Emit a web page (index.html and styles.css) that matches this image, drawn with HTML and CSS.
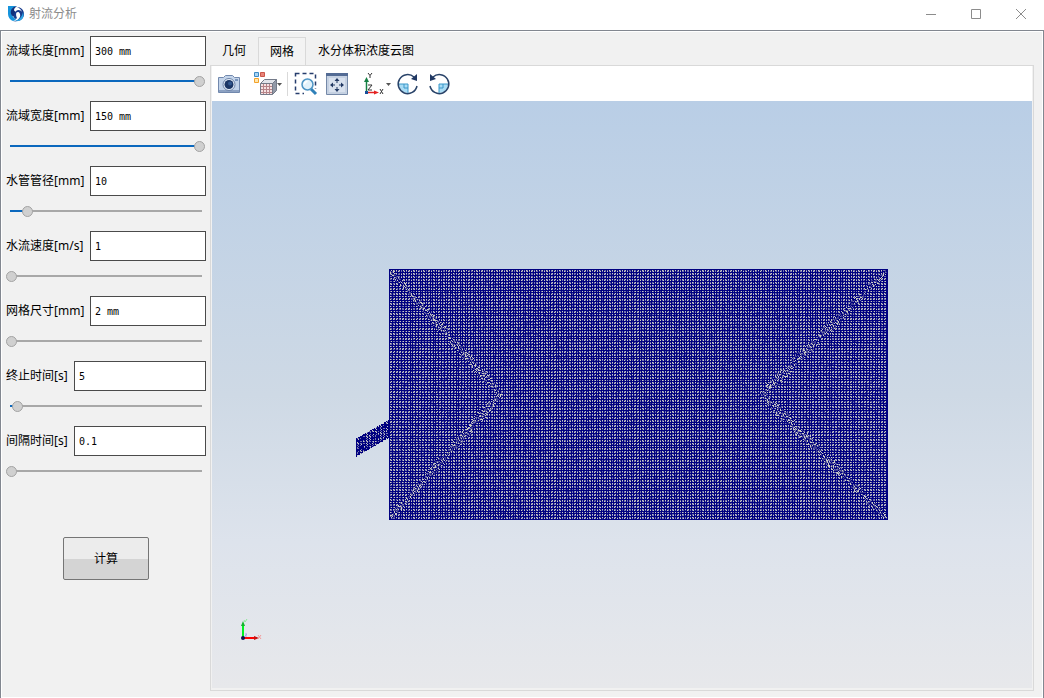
FILE: index.html
```
<!DOCTYPE html>
<html lang="zh-CN">
<head>
<meta charset="utf-8">
<title>射流分析</title>
<link rel="stylesheet" href="styles.css">
</head>
<body>
<header class="titlebar">
  <svg class="logo" viewBox="0 0 16 16" width="16" height="16" aria-hidden="true">
    <path d="M0 0h9C5 1 3 4 3.500 7.500S7 12 8 14L5 15C2 14 0 11 0 8z" fill="#1593dc"/>
    <path d="M9 0C4 1 2 4 3 8c1 3 4 3 5 1 1-3-2-4-2-5 0-2 2-3 3-4z" fill="#12307c"/>
    <path d="M9 1c4 0 7 3 7 7s-3 7-7 7l-4 1c5-2 8-4 7-8-1-3-4-2-4 0 0 3 2 4 0 5C4 12 6 7 8 5s5-1 6 1c-1-3-3-4-5-5z" fill="#173b8d"/>
    <path d="M15 6c2 6-2 10-8 9 4-1 7-4 8-9z" fill="#2ba5e5"/>
  </svg>
  <h1 class="title">射流分析</h1>
  <div class="window-buttons">
    <button class="window-button" type="button" aria-label="最小化"><svg width="12" height="12" viewBox="0 0 12 12"><path d="M1 6.500h10"/></svg></button>
    <button class="window-button" type="button" aria-label="最大化"><svg width="12" height="12" viewBox="0 0 12 12"><path d="M1.500 1.500h9v9h-9z"/></svg></button>
    <button class="window-button" type="button" aria-label="关闭"><svg width="12" height="12" viewBox="0 0 12 12"><path d="M1 1l10 10M11 1L1 11"/></svg></button>
  </div>
</header>
<main class="frame">
  <form class="params">
    <div class="param">
      <div class="field"><label for="length">流域长度[mm]</label><input class="value" id="length" type="text" value="300 mm"></div>
      <input class="slider" type="range" aria-label="流域长度" min="0" max="100" value="100" style="--fill:188px">
    </div>
    <div class="param">
      <div class="field"><label for="width">流域宽度[mm]</label><input class="value" id="width" type="text" value="150 mm"></div>
      <input class="slider" type="range" aria-label="流域宽度" min="0" max="100" value="100" style="--fill:188px">
    </div>
    <div class="param">
      <div class="field"><label for="pipe">水管管径[mm]</label><input class="value" id="pipe" type="text" value="10"></div>
      <input class="slider" type="range" aria-label="水管管径" min="0" max="188" value="16" style="--fill:16px">
    </div>
    <div class="param">
      <div class="field"><label for="speed">水流速度[m/s]</label><input class="value" id="speed" type="text" value="1"></div>
      <input class="slider" type="range" aria-label="水流速度" min="0" max="100" value="0" style="--fill:0px">
    </div>
    <div class="param">
      <div class="field"><label for="mesh-size">网格尺寸[mm]</label><input class="value" id="mesh-size" type="text" value="2 mm"></div>
      <input class="slider" type="range" aria-label="网格尺寸" min="0" max="100" value="0" style="--fill:0px">
    </div>
    <div class="param">
      <div class="field short"><label for="end">终止时间[s]</label><input class="value" id="end" type="text" value="5"></div>
      <input class="slider" type="range" aria-label="终止时间" min="0" max="188" value="6" style="--fill:6px">
    </div>
    <div class="param">
      <div class="field short"><label for="step">间隔时间[s]</label><input class="value" id="step" type="text" value="0.1"></div>
      <input class="slider" type="range" aria-label="间隔时间" min="0" max="100" value="0" style="--fill:0px">
    </div>
    <button class="compute" type="button">计算</button>
  </form>
  <section class="workspace">
    <div class="tabs" role="tablist">
      <button class="tab" type="button" role="tab">几何</button>
      <button class="tab active" type="button" role="tab" aria-selected="true">网格</button>
      <button class="tab" type="button" role="tab">水分体积浓度云图</button>
    </div>
    <div class="pane">
      <div class="toolbar">
        <button class="tool" type="button" aria-label="截图">
          <svg width="24" height="24" viewBox="0 0 24 24">
            <path d="M1.500 5.500h5l2-2h7l2 2h5v15h-21z" fill="#c3d4ea" stroke="#7188ad"/>
            <path d="M2 19h20" stroke="#8ca1c2" stroke-width="2"/>
            <circle cx="12" cy="12.500" r="6" fill="#e9f1fa" stroke="#6d83a8"/>
            <circle cx="12" cy="12.500" r="4.500" fill="#1c3766"/>
            <circle cx="13" cy="11.500" r="2" fill="#34598f"/>
            <path d="M18 8h3" stroke="#34598f"/>
          </svg>
        </button>
        <button class="tool view" type="button" aria-label="显示模式">
          <svg width="30" height="24" viewBox="0 0 30 24">
            <path d="M1.500 .5h4v4h-4z" fill="#a9d4f4" stroke="#3d8ac4"/>
            <path d="M7.500 .5h4v4h-4z" fill="#e98378" stroke="#c9574b"/>
            <path d="M1.500 6.500h4v4h-4z" fill="#ffe6ad" stroke="#f2a22b"/>
            <path d="M7.500 11.500l4-4h12l-4 4z" fill="#e1e4ea" stroke="#747b89"/>
            <path d="M19.500 11.500l4-4v11l-4 4z" fill="#9299a7" stroke="#747b89"/>
            <path d="M7.500 11.500h12v11h-12z" fill="#f6e2e2" stroke="#747b89"/>
            <path d="M10.500 12v10M13.500 12v10M16.500 12v10M8 14.500h11M8 17.500h11M8 20.500h11" stroke="#b68489"/>
            <path d="M24 11h5l-2.500 3z" fill="#555"/>
          </svg>
        </button>
        <span class="separator"></span>
        <button class="tool zoom" type="button" aria-label="框选缩放">
          <svg width="24" height="24" viewBox="0 0 24 24">
            <path d="M1.500 1.500h20v20h-20z" fill="none" stroke="#263d6d" stroke-width="1.500" stroke-dasharray="4 3"/>
            <path d="M10 17h14v7H10z" fill="#fff"/>
            <path d="M17 17l5 5" stroke="#2f80b9" stroke-width="3"/>
            <circle cx="13.500" cy="12.500" r="5.500" fill="#e2f2fb" stroke="#4d94c4" stroke-width="1.500"/>
            <path d="M10.500 12.500a3 3 0 0 1 3-3" fill="none" stroke="#fff" stroke-width="1.500"/>
          </svg>
        </button>
        <button class="tool fit" type="button" aria-label="适应窗口">
          <svg width="24" height="24" viewBox="0 0 24 24">
            <path d="M1.500 1.500h21v21h-21z" fill="#c5d1e2" stroke="#7589a8"/>
            <path d="M1 1h22v3H1z" fill="#536b94"/>
            <path d="M4 6h16v14H4z" fill="#d8e1ee"/>
            <path d="M12 8v3M12 15v3M7 13h3M14 13h3" stroke="#203863"/>
            <path d="M12 6l2.500 3h-5zM12 20l2.500-3h-5zM5 13l3-2.500v5zM19 13l-3-2.500v5z" fill="#203863"/>
          </svg>
        </button>
        <button class="tool axes" type="button" aria-label="视图方向">
          <svg width="28" height="24" viewBox="0 0 28 24">
            <path d="M3.500 20V9" stroke="#168044" stroke-width="1.500"/><path d="M3.500 5L6 10H1z" fill="#168044"/>
            <path d="M4 20.500h8" stroke="#e42222" stroke-width="1.500"/><path d="M16 20.500l-5-2v4z" fill="#e42222"/>
            <path d="M2 19h3v3H2z" fill="#174f9b"/>
            <path d="M5 1l2 2.500L9 1M7 3.500V6M5 13h4l-4 5h4M17 17l3 5M20 17l-3 5" fill="none" stroke="#333"/>
            <path d="M23 11h5l-2.500 3z" fill="#555"/>
          </svg>
        </button>
        <button class="tool rotate" type="button" aria-label="顺时针旋转">
          <svg width="24" height="24" viewBox="0 0 24 24">
            <path d="M3 12h9v9c-5 0-9-4-9-9z" fill="#a9dcf5"/><path d="M3 12h9v9M8 12v4h4" fill="none" stroke="#3a98ca"/>
            <path d="M18 5A9.500 9.500 0 1 0 21 14" fill="none" stroke="#294369" stroke-width="1.500"/>
            <path d="M21 2v7l-6-2z" fill="#203863"/>
          </svg>
        </button>
        <button class="tool" type="button" aria-label="逆时针旋转">
          <svg width="24" height="24" viewBox="0 0 24 24">
            <path d="M21 12h-9v9c5 0 9-4 9-9z" fill="#a9dcf5"/><path d="M21 12h-9v9M16 12v4h-4" fill="none" stroke="#3a98ca"/>
            <path d="M6 5A9.500 9.500 0 1 1 3 14" fill="none" stroke="#294369" stroke-width="1.500"/>
            <path d="M3 2v7l6-2z" fill="#203863"/>
          </svg>
        </button>
      </div>
      <div class="viewport">
        <canvas class="mesh" id="mesh" width="532" height="251"></canvas>
        <svg class="triad" width="24" height="24" viewBox="0 0 24 24" aria-hidden="true">
          <path d="M5 20V7" stroke="#00f020" stroke-width="2"/><path d="M5 3l2 5H3z" fill="#12b52a"/>
          <path d="M5 20h14" stroke="#f00" stroke-width="2"/><path d="M21 20l-5-2v4z" fill="#c51414"/>
          <circle cx="5" cy="20" r="2" fill="#101050"/>
          <path d="M6 2l1 2 2-3" fill="none" stroke="#8ee89a"/><path d="M20 17l3 4M23 17l-3 4" stroke="#f49a9a"/><path d="M7 16h2l-2 2h2" fill="none" stroke="#a8a0ee"/>
        </svg>
      </div>
    </div>
  </section>
</main>
<script src="mesh.js"></script>
</body>
</html>
```
FILE: styles.css
```
* { box-sizing: border-box; }
body {
  margin: 0;
  min-height: 100vh;
  display: flex;
  flex-direction: column;
  background: #f1f1f1;
  color: #000;
  font: 12px/16px "Noto Sans", "Noto Sans CJK SC", sans-serif;
}
button, input { font: inherit; color: inherit; margin: 0; }
svg, canvas { display: block; }
.titlebar {
  height: 30px;
  display: flex;
  align-items: center;
  gap: 5px;
  padding: 0 1px 2px 8px;
  background: #fff;
}
.title { margin: 0; font-size: 12px; font-weight: 400; color: #8c8c8c; }
.window-buttons { display: flex; margin-left: auto; }
.window-button {
  width: 45px;
  height: 28px;
  display: flex;
  align-items: center;
  justify-content: center;
  padding: 0;
  border: 0;
  background: none;
}
.window-button svg { fill: none; stroke: #8c8c8c; stroke-width: 1px; }
.frame {
  flex: 1;
  display: flex;
  border: 1px solid #828790;
  border-bottom: 0;
  box-shadow: inset 0 0 0 1px #fff;
}
.params {
  width: 209px;
  flex: none;
  display: flex;
  flex-direction: column;
  padding: 5px 4px 0 5px;
}
.param { height: 65px; }
.field { display: flex; gap: 6px; align-items: center; }
.field label { width: 78px; flex: none; white-space: nowrap; }
.short label { width: 62px; }
.value {
  flex: 1;
  min-width: 0;
  height: 30px;
  padding: 0 4px;
  border: 1px solid #4a4a4a;
  border-radius: 0;
  background: #fff;
  font: 10px/16px "DejaVu Sans Mono", monospace;
}
.slider {
  appearance: none;
  display: block;
  width: 199px;
  height: 11px;
  margin: 10px 0 0;
  background:
    linear-gradient(#0b68bd, #0b68bd) 4px 4px / var(--fill) 2px no-repeat,
    linear-gradient(#a8a8a8, #a8a8a8) 4px 4px / 192px 2px no-repeat;
}
.slider::-webkit-slider-thumb {
  appearance: none;
  width: 11px;
  height: 11px;
  border: 1px solid #a3a3a3;
  border-radius: 50%;
  background: #d0d0d0;
}
.compute {
  width: 86px;
  height: 43px;
  align-self: center;
  margin-top: 46px;
  border: 1px solid #757575;
  border-radius: 2px;
  background: linear-gradient(#ececec 50%, #d4d4d4 50%);
}
.workspace {
  flex: 1;
  min-width: 0;
  display: flex;
  flex-direction: column;
  padding: 6px 9px 7px 0;
}
.tabs { display: flex; height: 28px; }
.tab { padding: 0 12px; border: 0; background: none; }
.tab.active { padding: 0 11px; border: 1px solid #d9d9d9; border-bottom: 0; background: #f3f3f3; }
.pane {
  flex: 1;
  display: flex;
  flex-direction: column;
  padding: 0 1px 2px;
  border: 1px solid #d9d9d9;
}
.toolbar {
  height: 35px;
  display: flex;
  align-items: center;
  padding-left: 5px;
  background: #fff;
}
.tool { padding: 0; border: 0; background: none; margin-right: 8px; }
.tool.view { margin: 0 4px 0 4px; }
.separator { width: 1px; height: 24px; background: #d9d9d9; }
.tool.zoom { margin-left: 6px; margin-right: 7px; }
.tool.fit { margin-right: 14px; }
.tool.axes { margin-right: 5px; }
.tool.rotate { margin-right: 7px; }
.viewport {
  position: relative;
  flex: 1;
  display: flex;
  align-items: center;
  justify-content: center;
  background: linear-gradient(#b9cee6, #ced9e5 50%, #dde3ec 75%, #e7e8eb);
}
.triad { position: absolute; left: 26px; bottom: 46px; }
```
FILE: mesh.js
```
// Triangular surface mesh: 2 mm elements over the basin and inlet pipe.
const canvas = document.getElementById("mesh");
const ctx = canvas.getContext("2d");
const W = canvas.width, H = canvas.height, LEFT = 33;
const SIDE = 3.32, ROW = 2.87;
const EDGE = [0, 0, 128], DIM = [62, 62, 145], MID = [118, 118, 174], FACE = [204, 204, 196];
const image = ctx.createImageData(W, H);
const mod = (a, b) => ((a % b) + b) % b;
const noise = (x, y) => mod(Math.sin(x * 127.1 + y * 311.7) * 43758.5453, 1);

// Shade of one pixel in a strip of elements that runs in the "along" direction.
function shade(along, across) {
  const strip = mod(across, ROW);
  if (strip < 1) return EDGE;
  const cell = mod(along, SIDE);
  if (strip < 2) return cell < 1 ? FACE : cell >= 1.66 && cell < 2.66 ? MID : EDGE;
  return cell < 1 ? MID : cell >= 1.66 && cell < 2.66 ? FACE : EDGE;
}

for (let y = 0; y < H; y++) {
  for (let x = 0; x < W; x++) {
    const inPipe = x < LEFT && y >= 169 - x * 19 / 33 && y <= 187 - x * 19 / 33;
    if (x < LEFT && !inPipe) continue;
    const bx = x - LEFT;
    const toSide = Math.min(bx * 1.13, W - 1 - x);
    const toEdge = Math.min(y, H - 1 - y);
    const vertical = toSide < toEdge;
    const seamWidth = 2 + 5 * noise(Math.floor(toEdge / 9), 4);
    const n = noise(x, y);
    let color = vertical ? shade(y, bx) : shade(bx, y);
    if (Math.abs(toSide - toEdge) < seamWidth) {
      color = n < 0.12 ? FACE : n < 0.26 ? MID : n < 0.42 ? DIM : shade(bx + y * 0.4, y - bx * 0.2);
    }
    if (inPipe) color = shade(y + x * 0.576, x);
    if (inPipe && n < 0.3) color = EDGE;
    if (color === FACE && n > 0.8) color = MID;
    if (color === MID && n < 0.3) color = DIM;
    if (toEdge === 0 || bx === 0 || x === 0 || x === W - 1) color = EDGE;
    image.data.set([...color, 255], (y * W + x) * 4);
  }
}
ctx.putImageData(image, 0, 0);
```
